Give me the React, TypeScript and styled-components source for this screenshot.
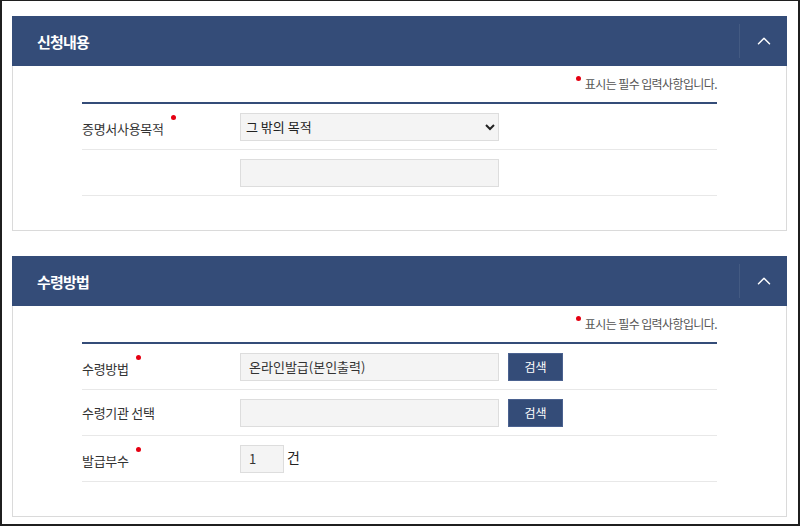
import React from "react";
import styled, { createGlobalStyle } from "styled-components";
import { ChevronUp } from "lucide-react";

const NAVY = "#344c78";

const GlobalStyle = createGlobalStyle`
  html, body {
    margin: 0;
    padding: 0;
    background: #ffffff;
  }
  body {
    font-family: "Noto Sans CJK KR", "Noto Sans", sans-serif;
    color: #333333;
  }
`;

type Row = {
  label: string;
  required?: boolean;
  kind: "select" | "input" | "search" | "count";
  value?: string;
};

const purposeRows: Row[] = [
  { label: "증명서사용목적", required: true, kind: "select", value: "그 밖의 목적" },
  { label: "", kind: "input" },
];

const receiveRows: Row[] = [
  { label: "수령방법", required: true, kind: "search", value: "온라인발급(본인출력)" },
  { label: "수령기관 선택", kind: "search", value: "" },
  { label: "발급부수", required: true, kind: "count", value: "1" },
];

export default function App() {
  return (
    <>
      <GlobalStyle />
      <Frame>
        <Section title="신청내용" rows={purposeRows} />
        <Section title="수령방법" rows={receiveRows} />
      </Frame>
    </>
  );
}

const Section = ({ title, rows }: { title: string; rows: Row[] }) => {
  return (
    <Panel>
      <PanelHeader>
        <Title>{title}</Title>
        <ToggleButton type="button" aria-label="접기">
          <ChevronUp size={22} strokeWidth={1.6} color="#ffffff" />
        </ToggleButton>
      </PanelHeader>
      <PanelBody>
        <Note>
          <Dot $raise={8} $gap={0} />
          <span>표시는 필수 입력사항입니다.</span>
        </Note>
        <FormTable>
          {rows.map((row, i) => (
            <FormRow key={i}>
              <Label>
                {row.label}
                {row.required && <Dot $raise={14} $gap={7} />}
              </Label>
              <Field>{renderField(row)}</Field>
            </FormRow>
          ))}
        </FormTable>
      </PanelBody>
    </Panel>
  );
};

function renderField(row: Row) {
  switch (row.kind) {
    case "select":
      return (
        <Select defaultValue={row.value}>
          <option>{row.value}</option>
        </Select>
      );
    case "search":
      return (
        <>
          <TextInput $width={259} defaultValue={row.value} readOnly />
          <SearchButton type="button">검색</SearchButton>
        </>
      );
    case "count":
      return (
        <>
          <TextInput $width={44} defaultValue={row.value} />
          <Unit>건</Unit>
        </>
      );
    default:
      return <TextInput $width={259} />;
  }
}

const Frame = styled.div`
  box-sizing: border-box;
  width: 800px;
  height: 526px;
  border: 2px solid #1f1f1f;
  border-top-width: 1px;
  padding: 15px 11px 0 10px;
  display: flex;
  flex-direction: column;
  gap: 25px;
  overflow: hidden;
`;

const Panel = styled.section`
  display: flex;
  flex-direction: column;
`;

const PanelHeader = styled.header`
  height: 50px;
  background: ${NAVY};
  display: flex;
  align-items: center;
  padding-left: 25px;
`;

const Title = styled.h2`
  margin: 0;
  font-size: 15px;
  font-weight: 700;
  letter-spacing: -0.8px;
  color: #ffffff;
`;

const ToggleButton = styled.button`
  margin-left: auto;
  width: 48px;
  height: 34px;
  padding: 0;
  border: 0;
  border-left: 1px solid rgba(255, 255, 255, 0.08);
  background: transparent;
  display: flex;
  align-items: center;
  justify-content: center;
`;

const PanelBody = styled.div`
  border: 1px solid #dadada;
  border-top: 0;
  padding: 0 69px 34px;
`;

const Note = styled.div`
  box-sizing: border-box;
  height: 36px;
  padding-top: 9px;
  line-height: 18px;
  text-align: right;
  font-size: 12px;
  letter-spacing: -0.6px;
  color: #555555;

  span {
    margin-left: 4px;
  }
`;

const Dot = styled.i<{ $raise: number; $gap: number }>`
  display: inline-block;
  width: 5px;
  height: 5px;
  border-radius: 50%;
  background: #e50012;
  margin-left: ${(p) => p.$gap}px;
  vertical-align: ${(p) => p.$raise}px;
`;

const FormTable = styled.div`
  border-top: 2px solid ${NAVY};
`;

const FormRow = styled.div`
  box-sizing: border-box;
  height: 46px;
  display: grid;
  grid-template-columns: 158px 1fr;
  align-items: center;
  border-bottom: 1px solid #e8e8e8;
`;

const Label = styled.div`
  font-size: 13px;
  letter-spacing: -0.3px;
  color: #333333;
  line-height: 20px;
`;

const Field = styled.div`
  display: flex;
  align-items: center;
  gap: 9px;
`;

const Select = styled.select`
  box-sizing: border-box;
  width: 259px;
  height: 28px;
  border: 1px solid #dddddd;
  background: #f4f4f4;
  font-family: "Noto Sans CJK KR", sans-serif;
  font-size: 13px;
  color: #222222;
  padding: 0 1px;
`;

const TextInput = styled.input<{ $width: number }>`
  box-sizing: border-box;
  width: ${(p) => p.$width}px;
  height: 28px;
  border: 1px solid #dddddd;
  background: #f4f4f4;
  padding: 0 8px;
  font-family: "Noto Sans CJK KR", sans-serif;
  font-size: 13px;
  color: #333333;
  outline: none;
`;

const SearchButton = styled.button`
  box-sizing: border-box;
  width: 55px;
  height: 28px;
  border: 1px solid #4b6290;
  background: ${NAVY};
  color: #ffffff;
  font-family: "Noto Sans CJK KR", sans-serif;
  font-size: 12px;
  padding: 0;
`;

const Unit = styled.span`
  font-size: 14px;
  color: #222222;
  margin-left: -6px;
  margin-top: -4px;
`;
